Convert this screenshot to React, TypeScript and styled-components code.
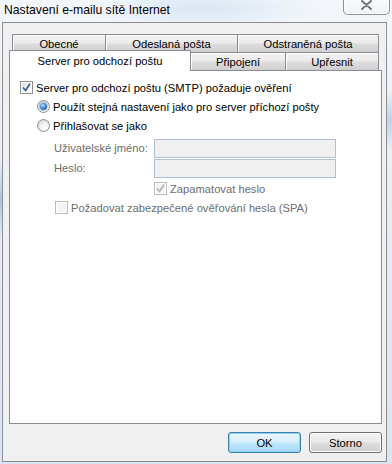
import React from "react"
import styled, { createGlobalStyle } from "styled-components"

const FONT = `"Liberation Sans", Arial, sans-serif`

const GlobalStyle = createGlobalStyle`
  html, body {
    margin: 0;
    padding: 0;
  }
  body {
    font-family: ${FONT};
    font-size: 11.2px;
    color: #000;
    overflow: hidden;
  }
`

interface TabDef {
  label: string
  width: number
  selected?: boolean
}

const backTabs: TabDef[] = [
  { label: "Obecné", width: 94 },
  { label: "Odeslaná pošta", width: 133 },
  { label: "Odstraněná pošta", width: 142 },
]

const frontTabs: TabDef[] = [
  { label: "Server pro odchozí poštu", width: 182, selected: true },
  { label: "Připojení", width: 96 },
  { label: "Upřesnit", width: 94 },
]

const CheckMark: React.FC<{ disabled?: boolean }> = ({ disabled }) => (
  <svg width="9" height="9" viewBox="0 0 9 9">
    <path
      d="M1 4.5 L3.5 7.5 L8 0.8"
      fill="none"
      stroke={disabled ? "#b2b2b2" : "#3d5b93"}
      strokeWidth="1.7"
      strokeLinejoin="round"
    />
  </svg>
)

const Checkbox: React.FC<{ checked?: boolean; disabled?: boolean }> = ({ checked, disabled }) => (
  <S.CheckBox $disabled={disabled}>{checked && <CheckMark disabled={disabled} />}</S.CheckBox>
)

const Radio: React.FC<{ checked?: boolean }> = ({ checked }) => (
  <S.RadioOuter>{checked && <S.RadioDot />}</S.RadioOuter>
)

const CloseGlyph = () => (
  <svg width="13" height="10" viewBox="0 0 13 10">
    <path d="M2 1 L11 9 M11 1 L2 9" stroke="#fff" strokeWidth="4" strokeLinecap="round" />
    <path d="M2 1 L11 9 M11 1 L2 9" stroke="#6f747c" strokeWidth="2" strokeLinecap="round" />
  </svg>
)

export default function App() {
  return (
    <>
      <GlobalStyle />
      <S.Window>
        <S.TitleBar>
          <S.Title>Nastavení e-mailu sítě Internet</S.Title>
          <S.CloseButton>
            <CloseGlyph />
          </S.CloseButton>
        </S.TitleBar>
        <S.Client>
          <S.TabStrip>
            <S.TabRow $inset={3}>
              {backTabs.map((t) => (
                <S.Tab key={t.label} $width={t.width}>
                  {t.label}
                </S.Tab>
              ))}
            </S.TabRow>
            <S.TabRow $inset={0}>
              {frontTabs.map((t) => (
                <S.Tab key={t.label} $width={t.width} $selected={t.selected}>
                  {t.label}
                </S.Tab>
              ))}
            </S.TabRow>
          </S.TabStrip>
          <S.Panel>
            <S.OptionRow $indent={0}>
              <Checkbox checked />
              <S.OptionText>Server pro odchozí poštu (SMTP) požaduje ověření</S.OptionText>
            </S.OptionRow>
            <S.OptionRow $indent={17}>
              <Radio checked />
              <S.OptionText>Použít stejná nastavení jako pro server příchozí pošty</S.OptionText>
            </S.OptionRow>
            <S.OptionRow $indent={17}>
              <Radio />
              <S.OptionText>Přihlašovat se jako</S.OptionText>
            </S.OptionRow>
            <S.Fields>
              <S.FieldRow>
                <S.FieldLabel>Uživatelské jméno:</S.FieldLabel>
                <S.TextBox />
              </S.FieldRow>
              <S.FieldRow>
                <S.FieldLabel>Heslo:</S.FieldLabel>
                <S.TextBox />
              </S.FieldRow>
            </S.Fields>
            <S.OptionRow $indent={134}>
              <Checkbox checked disabled />
              <S.OptionText $disabled>Zapamatovat heslo</S.OptionText>
            </S.OptionRow>
            <S.OptionRow $indent={35}>
              <Checkbox disabled />
              <S.OptionText $disabled>Požadovat zabezpečené ověřování hesla (SPA)</S.OptionText>
            </S.OptionRow>
          </S.Panel>
          <S.ButtonRow>
            <S.Button $default>OK</S.Button>
            <S.Button>Storno</S.Button>
          </S.ButtonRow>
        </S.Client>
      </S.Window>
    </>
  )
}

const S = {
  Window: styled.div`
    width: 392px;
    height: 464px;
    display: flex;
    flex-direction: column;
    background:
      radial-gradient(ellipse 60px 40px at 0px 200px, rgba(120, 165, 215, 0.55), transparent),
      radial-gradient(ellipse 80px 30px at 390px 120px, rgba(140, 180, 225, 0.5), transparent),
      radial-gradient(ellipse 120px 20px at 200px 8px, rgba(205, 222, 240, 0.7), transparent),
      linear-gradient(180deg, #f3f7fb 0%, #e6eef7 40%, #d9e5f2 100%);
  `,
  TitleBar: styled.div`
    height: 22px;
    display: flex;
    align-items: flex-start;
    justify-content: space-between;
  `,
  Title: styled.div`
    padding: 3px 0 0 4px;
    font-family: ${FONT};
    font-size: 12.2px;
    color: #000;
    text-shadow: 0 0 6px rgba(255, 255, 255, 0.9);
  `,
  CloseButton: styled.div`
    box-sizing: border-box;
    width: 47px;
    height: 15px;
    margin-right: 2px;
    border: 1px solid #8d939b;
    border-top: none;
    border-radius: 0 0 5px 5px;
    background: linear-gradient(180deg, rgba(255, 255, 255, 0.5), rgba(235, 240, 246, 0.6));
    box-shadow: inset 0 0 0 1px rgba(255, 255, 255, 0.6);
    display: flex;
    justify-content: center;
    align-items: flex-start;
  `,
  Client: styled.div`
    flex: 1;
    margin: 0 5px 2px 2px;
    border: 1px solid #8c8e91;
    background: #f0f0f0;
    padding: 11px 4px 8px 6px;
    display: flex;
    flex-direction: column;
  `,
  TabStrip: styled.div`
    height: 36px;
    display: flex;
    flex-direction: column;
  `,
  TabRow: styled.div<{ $inset: number }>`
    height: 18px;
    display: flex;
    align-items: flex-end;
    padding-left: ${({ $inset }) => $inset}px;
  `,
  Tab: styled.div<{ $width: number; $selected?: boolean }>`
    box-sizing: border-box;
    width: ${({ $width }) => $width}px;
    height: ${({ $selected }) => ($selected ? 21 : 18)}px;
    margin-left: -1px;
    margin-bottom: ${({ $selected }) => ($selected ? -1 : 0)}px;
    border: 1px solid #898c95;
    border-bottom: none;
    background: ${({ $selected }) =>
      $selected ? "#fff" : "linear-gradient(180deg, #f3f3f3 0%, #ebebeb 45%, #dddddd 55%, #cfcfcf 100%)"};
    box-shadow: ${({ $selected }) => ($selected ? "none" : "inset 1px 1px 0 #fcfcfc")};
    position: relative;
    z-index: ${({ $selected }) => ($selected ? 2 : 1)};
    display: flex;
    align-items: center;
    justify-content: center;
    padding-bottom: ${({ $selected }) => ($selected ? 1 : 0)}px;
    white-space: nowrap;
    &:first-child {
      margin-left: 0;
    }
  `,
  Panel: styled.div`
    flex: 1;
    background: #fff;
    border: 1px solid #898c95;
    padding: 7px 0 0 10px;
    display: flex;
    flex-direction: column;
  `,
  OptionRow: styled.div<{ $indent: number }>`
    height: 19px;
    display: flex;
    align-items: center;
    margin-left: ${({ $indent }) => $indent}px;
  `,
  OptionText: styled.span<{ $disabled?: boolean }>`
    margin-left: 3px;
    white-space: nowrap;
    color: ${({ $disabled }) => ($disabled ? "#6d6d6d" : "#000")};
  `,
  CheckBox: styled.span<{ $disabled?: boolean }>`
    box-sizing: border-box;
    width: 13px;
    height: 13px;
    flex: none;
    border: 1px solid ${({ $disabled }) => ($disabled ? "#bcbcbc" : "#8e8f8f")};
    background: ${({ $disabled }) =>
      $disabled ? "#f4f4f4" : "linear-gradient(135deg, #dcdfe4 0%, #f2f3f5 60%, #ffffff 100%)"};
    box-shadow: inset 0 0 0 1px #fff;
    display: flex;
    align-items: center;
    justify-content: center;
  `,
  RadioOuter: styled.span`
    box-sizing: border-box;
    width: 13px;
    height: 13px;
    flex: none;
    border-radius: 50%;
    border: 1px solid #8e8f8f;
    background: radial-gradient(circle at 65% 70%, #ffffff 0%, #f0f0f0 45%, #c8ccd2 100%);
    display: flex;
    align-items: center;
    justify-content: center;
  `,
  RadioDot: styled.span`
    width: 7px;
    height: 7px;
    border-radius: 50%;
    background: radial-gradient(circle at 40% 35%, #c4e4fb 0%, #3f8ad3 45%, #1b4f8f 100%);
    box-shadow: 0 0 0 1px rgba(60, 110, 170, 0.35);
  `,
  Fields: styled.div`
    margin-top: 4px;
    display: flex;
    flex-direction: column;
  `,
  FieldRow: styled.div`
    height: 20px;
    display: flex;
    align-items: flex-start;
    margin-left: 34px;
  `,
  FieldLabel: styled.span`
    width: 100px;
    line-height: 19px;
    color: #6d6d6d;
    white-space: nowrap;
  `,
  TextBox: styled.div`
    box-sizing: border-box;
    width: 182px;
    height: 19px;
    border: 1px solid #b1bfd1;
    background: #f0f0f0;
  `,
  ButtonRow: styled.div`
    margin-top: 8px;
    display: flex;
    justify-content: flex-end;
    gap: 8px;
  `,
  Button: styled.div<{ $default?: boolean }>`
    box-sizing: border-box;
    width: 73px;
    height: 21px;
    border-radius: 3px;
    border: 1px solid ${({ $default }) => ($default ? "#3c7fb1" : "#707070")};
    background: ${({ $default }) =>
      $default
        ? "linear-gradient(180deg, #eaf6fd 0%, #d9f0fc 45%, #bee6fd 55%, #a7d9f5 100%)"
        : "linear-gradient(180deg, #f2f2f2 0%, #ebebeb 45%, #dddddd 55%, #cfcfcf 100%)"};
    box-shadow: ${({ $default }) =>
      $default ? "inset 0 0 0 1px #8fd1f2" : "inset 0 0 0 1px #fcfcfc"};
    display: flex;
    align-items: center;
    justify-content: center;
  `,
}
